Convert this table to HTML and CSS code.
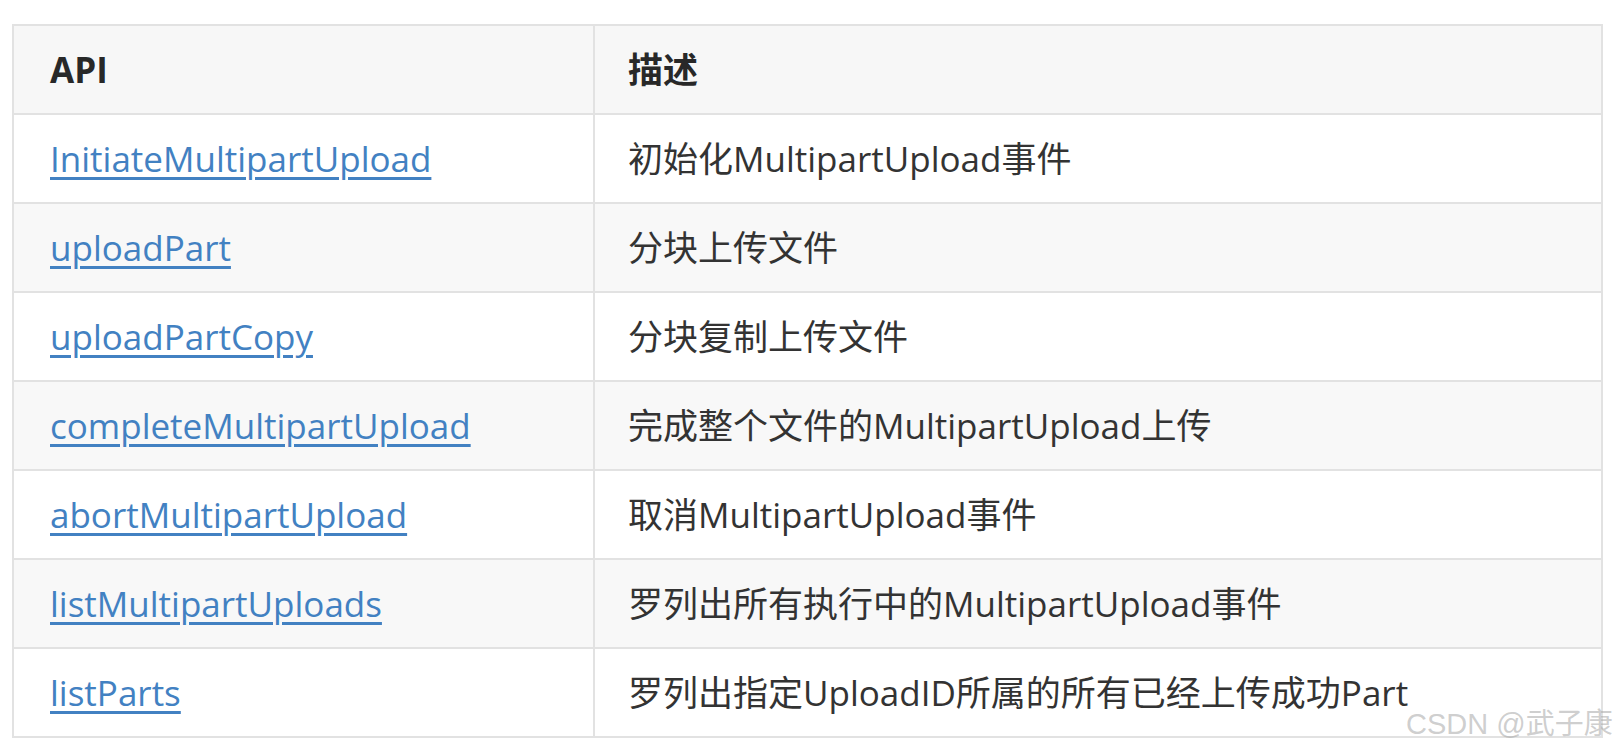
FILE: index.html
```html
<!DOCTYPE html>
<html lang="zh-CN">
<head>
<meta charset="utf-8">
<title>Multipart Upload API</title>
<link rel="stylesheet" href="styles.css">
</head>
<body>
<div class="page">
  <table class="api-table">
    <colgroup>
      <col class="col-api">
      <col class="col-desc">
    </colgroup>
    <thead>
      <tr><th>API</th><th class="desc">描述</th></tr>
    </thead>
    <tbody>
      <tr><td><a href="#">InitiateMultipartUpload</a></td><td class="desc">初始化MultipartUpload事件</td></tr>
      <tr><td><a href="#">uploadPart</a></td><td class="desc">分块上传文件</td></tr>
      <tr><td><a href="#">uploadPartCopy</a></td><td class="desc">分块复制上传文件</td></tr>
      <tr><td><a href="#">completeMultipartUpload</a></td><td class="desc">完成整个文件的MultipartUpload上传</td></tr>
      <tr><td><a href="#">abortMultipartUpload</a></td><td class="desc">取消MultipartUpload事件</td></tr>
      <tr><td><a href="#">listMultipartUploads</a></td><td class="desc">罗列出所有执行中的MultipartUpload事件</td></tr>
      <tr><td><a href="#">listParts</a></td><td class="desc">罗列出指定UploadID所属的所有已经上传成功Part</td></tr>
    </tbody>
  </table>
  <div class="watermark">CSDN @武子康</div>
</div>
</body>
</html>
```

FILE: styles.css
```css
html, body {
  margin: 0;
  padding: 0;
  background: #ffffff;
}

.page {
  position: relative;
  width: 1620px;
  height: 756px;
  padding: 24px 0 0 12px;
  box-sizing: border-box;
  overflow: hidden;
}

.api-table {
  border-collapse: collapse;
  width: 1591px;
  table-layout: fixed;
  font-family: "Open Sans", "Noto Sans CJK SC", sans-serif;
  font-size: 35px;
  color: #333333;
}

.col-api { width: 581px; }

.api-table th,
.api-table td {
  border: 2px solid #e2e2e2;
  padding: 17px 35px 17px 36px;
  height: 53px;
  line-height: 53px;
  text-align: left;
  vertical-align: middle;
  white-space: nowrap;
}

.api-table .desc {
  padding-left: 33px;
}

.api-table th {
  font-weight: 700;
  background: #f7f7f7;
  color: #282828;
}

.api-table tbody tr:nth-child(even) td {
  background: #f8f8f8;
}

.api-table a {
  color: #4281c2;
  text-decoration: underline;
  text-underline-offset: 5px;
  text-decoration-thickness: 3px;
}

.watermark {
  position: absolute;
  left: 1406px;
  top: 706px;
  font-family: "Liberation Sans", "Noto Sans CJK SC", sans-serif;
  font-size: 29px;
  line-height: 36px;
  color: rgba(165, 165, 165, 0.55);
  white-space: nowrap;
}
```
